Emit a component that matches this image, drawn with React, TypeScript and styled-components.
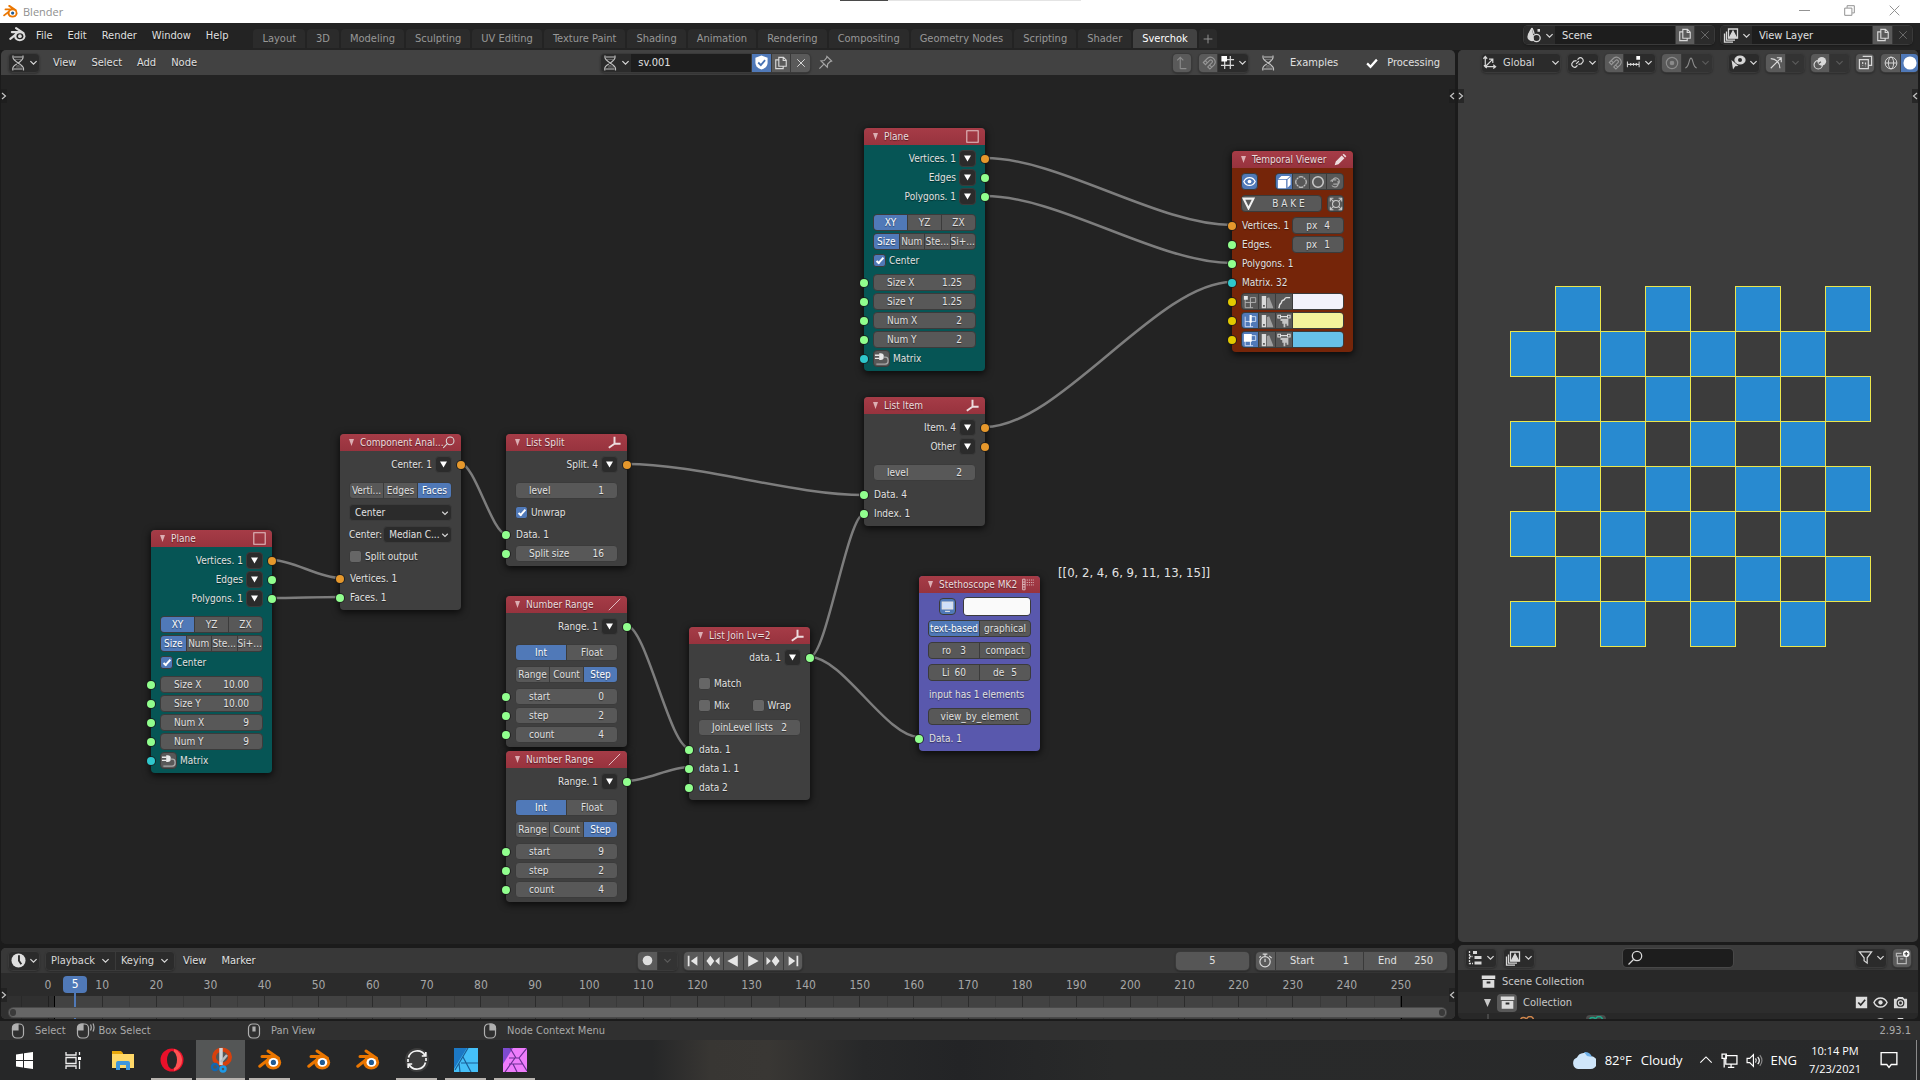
import React from 'react';
import styled, { createGlobalStyle, css } from 'styled-components';

const UI_FONT = '"DejaVu Sans Condensed", "DejaVu Sans", sans-serif';
const SYS_FONT = '"Open Sans", "Noto Sans", sans-serif';

const c = {
  bg: '#1b1b1b',
  top: '#232323',
  canvas: '#232323',
  header: '#424242',
  panel: '#3c3c3c',
  dark: '#2b2b2b',
  field: '#585858',
  blue: '#5079b8',
  edge: '#3b3b3b',
  text: '#e0e0e0',
  orange: '#e6982c',
  green: '#91ff8e',
  cyan: '#2fc7cc',
  yellow: '#e3c900',
};

const GlobalStyle = createGlobalStyle`
  *, *::before, *::after { box-sizing: border-box; }
  html, body { margin: 0; background: ${c.bg}; }
  body { font-family: ${UI_FONT}; font-size: 11px; line-height: 16px; color: ${c.text}; }
  button, input, select { font: inherit; color: inherit; margin: 0; }
  button { border: 0; padding: 0; background: none; cursor: default; }
  svg { display: block; flex: none; }
`;

/* ---------- icons ---------- */

const S = ({ size = 14, children, sw = 1.3, color = 'currentColor' }: any) => (
  <svg width={size} height={size} viewBox="0 0 16 16" fill="none" stroke={color} strokeWidth={sw} aria-hidden="true">
    {children}
  </svg>
);

const BlenderLogo = ({ size, mono }: { size: number; mono?: boolean }) => {
  const body = mono ? '#dcdcdc' : '#ea7600';
  return (
    <svg width={size} height={size} viewBox="0 0 24 24" aria-hidden="true">
      <path d="M10 3 L20.5 10.2 M4 8.6 H17 M1.8 18.2 L13 9.4" stroke={body} strokeWidth="3" strokeLinecap="round" fill="none" />
      <ellipse cx="15.2" cy="14.6" rx="8" ry="7" fill={body} />
      <ellipse cx="15.4" cy="14.4" rx="4.9" ry="4.3" fill={mono ? '#232323' : '#fff'} />
      <circle cx="15.4" cy="14.4" r="2.6" fill={mono ? '#dcdcdc' : '#1f5b94'} />
    </svg>
  );
};
const Chevron = ({ size = 9, dim }: { size?: number; dim?: boolean }) => (
  <S size={size} sw={2.2} color={dim ? '#5a5a5a' : '#d8d8d8'}><path d="M2.5 5.5 8 11l5.500-5.500" /></S>
);
const Dna = ({ size = 16 }) => (
  <S size={size} color="#c0c0c0" sw={1.2}>
    <path d="M3 .5v2C3 6.500 13.500 9.500 13.500 13.500v2M13 .5v2C13 5 9.500 7 7.500 8.600M6.800 9.100C4.500 10.500 2.800 11.800 2.800 13.500v2" />
    <path d="M4 2h8.500M3.500 14h9" strokeWidth="1" />
    <path d="M5 4.400h6M6 12h6M6.500 10.700h3" strokeWidth="0.600" opacity="0.700" />
  </S>
);
const Copy = ({ size = 14 }) => (
  <S size={size}><path d="M5.500 1.500h5.300l3.200 3.200v7H5.500zM10.500 1.500v3.600H14M5.200 4.500H2v10h8.500v-2.600" /></S>
);
const Cross = ({ size = 12, dim }: any) => <S size={size} color={dim ? '#6a6a6a' : '#d8d8d8'}><path d="M3 3l10 10M13 3 3 13" /></S>;
const Shield = () => (
  <S size={15} sw={0}><path d="M8 .5 14.500 3v5c0 4-3 6.500-6.500 7.500C4.500 14.500 1.500 12 1.500 8V3z" fill="#fff" /><path d="M4.500 8 7.300 10.800 11.800 5.500" stroke="#4772b3" strokeWidth="1.900" /></S>
);
const Pin = () => <S size={15} color="#a4a4a4"><path d="M9.500 1.500l5 5-1.500.5-2.700 2.700-.4 3.300L3.200 6.300l3.500-.4L9.200 3zM6.300 9.700 1.500 14.500" /></S>;
const Magnet = () => <S size={15} color="#979797" sw={1.200}><path d="M2.500 8 7 3.500a5 5 0 0 1 7 7L9.500 15l-2.300-2.300 4.500-4.500a1.700 1.700 0 0 0-2.400-2.400L4.800 10.300zM4.500 6l2.300 2.300M11.500 13 9.200 10.700" /></S>;
const Check = () => <S size={12} sw={3} color="#fff"><path d="M1.500 8.500 6 13 14.500 3.500" /></S>;
const Scene = () => <S size={16}><path d="M6 1C4.500 4 2 6.500 2 10a4 3.500 0 0 0 6 3" fill="#d8d8d8" /><path d="M6 1c1 2.500 2 4 2 6" /><circle cx="10.500" cy="11" r="3.700" /><path d="M11.500 3.300h2.500" strokeWidth="2.800" /></S>;
const Layers = () => <S size={16}><path d="M5.500 2h9v9h-9z" /><path d="M6.500 10.500 10 4l3.500 6.500z" fill="#d8d8d8" /><path d="M3.500 4.500v8.700H12M1.500 6.500v8.700H10" /></S>;
const Axes = () => <S size={15}><path d="M3.500 1.500v11h11M1.500 4l2-2.500L5.500 4M12 10.500l2.500 2-2.500 2M4 12 11 5M7.500 4.500h4V8.500M2 11l3 3" /></S>;
const Pivot = () => <S size={15}><path d="M6.500 9.500 9.500 6.500M8 5l2-2a3.200 3.200 0 0 1 4 4l-2 2.500-3 .5M8 11l-2 2a3.200 3.200 0 0 1-4-4l2-2.500L7 6" /></S>;
const SnapGrid = () => <S size={15}><path d="M5 6v9M11 1v14M1 11h14M6 5h9" /><path d="M1.500 1h6v6h-6z" fill="#fff" stroke="none" /></S>;
const SnapInc = () => <S size={15} sw={1.100}><path d="M1.500 7v6M5 8.500v3M8 8.500v3M11 8.500v3M14 7v6M1.500 10H14" /><path d="M11 1h4v4h-4z" fill="#fff" stroke="none" /></S>;
const Radio = () => <S size={14} color="#8b8b8b"><circle cx="8" cy="8" r="6.500" /><circle cx="8" cy="8" r="2" fill="#8b8b8b" /></S>;
const Falloff = () => <S size={14} color="#8b8b8b"><path d="M1.500 13.500C6 13.500 5.500 2.500 8 2.500s2 11 6.500 11" /></S>;
const EyeCursor = () => <S size={16}><ellipse cx="10" cy="5" rx="5" ry="3.800" fill="#d8d8d8" /><circle cx="10" cy="5" r="2" fill="#2b2b2b" stroke="none" /><path d="M1.500 5l7 6-3.300.3L3 14.500z" fill="#d8d8d8" stroke="none" /></S>;
const Gizmo = () => <S size={14}><path d="M2 14 13.500 2.500M9 2h5v5M2 3c6 0 10.500 4.500 10.500 11" /></S>;
const Overlay = () => <S size={14}><circle cx="6" cy="10" r="4.800" /><circle cx="10" cy="6" r="5" fill="#d8d8d8" stroke="none" /><path d="M6.500 8.500 9 6.500" stroke="#555" /></S>;
const Xray = () => <S size={15}><path d="M5 1.500h9.500V11H11M1.500 5H11v9.500H1.500z" /><path d="M5 7.500v4M8 8v4" strokeDasharray="2 1.500" /></S>;
const Globe = () => <S size={14} sw={1.100}><circle cx="8" cy="8" r="6.700" /><ellipse cx="8" cy="8" rx="3" ry="6.700" /><path d="M1.300 8h13.400" /></S>;
const Solid = () => <S size={14} sw={0}><circle cx="8" cy="8" r="7.500" fill="#fff" /></S>;
const UpArrow = () => <S size={14} color="#8c8c8c"><path d="M6 14.500V1.500M2.500 5 6 1.500 9.500 5M6 14.500h7" /></S>;
const Clock = () => <S size={15} sw={0}><circle cx="8" cy="8" r="7.500" fill="#dedede" /><path d="M8.500 2.500V8.300L11 12" stroke="#2b2b2b" strokeWidth="2" /></S>;
const Stopwatch = () => <S size={15}><circle cx="7.500" cy="9.300" r="5.500" /><path d="M7.500 9.500V6M5 1.200h5M7.500 1.200v2.500M12 3l2.500 2.500M3 3.500 1.500 5" /></S>;
const Tree = () => <S size={16}><path d="M2.500 1v12.500H6M2.500 6.500H6" strokeDasharray="2 1" /><path d="M6 2.500h4M7.500 7.500h7M7.500 13h7" strokeWidth="3" /></S>;
const Search = ({ size = 15 }) => <S size={size} color="#d8d8d8"><circle cx="10" cy="6" r="4.700" /><path d="M6.500 9.500 1.500 14.500" /></S>;
const Funnel = () => <S size={15}><path d="M1.500 2h13L9.800 8.300V14L6.500 11.500V8.300z" /></S>;
const NewCollection = () => <S size={15} color="#b5b5b5"><path d="M7 3.500H1.500v3H14M2.500 6.500v8h9.500v-8M5.500 9.500h3.500" /><circle cx="12" cy="4" r="3.500" fill="#fff" stroke="none" /><path d="M12 2v4M10 4h4" stroke="#444" /></S>;
const Box = () => <S size={15} sw={0}><path d="M.8 1.500h14.400v3.800H.8zM1.800 6.300h12.400v8.400H1.800z" fill="#dcdcdc" /><path d="M6 8h4v2H6z" fill="#2b2b2b" /></S>;
const Camera = () => <S size={15}><path d="M1 4h3l1.500-2h5L12 4h3v10H1z" fill="#d8d8d8" stroke="none" /><circle cx="8" cy="8.500" r="3.500" stroke="#2b2b2b" /><circle cx="8" cy="8.500" r="1.500" fill="#2b2b2b" stroke="none" /></S>;
const Eye = ({ size = 14, color = '#e0e0e0' }) => <S size={size} color={color}><path d="M1 8c3-6.500 11-6.500 14 0-3 6.500-11 6.500-14 0z" strokeWidth="1.500" /><circle cx="8" cy="8" r="2.300" fill={color} stroke="none" /></S>;
const TickMark = () => <S size={13} sw={0}><path d="M1 1h14v14H1z" fill="#dcdcdc" /><path d="M4 8l3 3 5.500-6.500" stroke="#2b2b2b" strokeWidth="2" /></S>;
const MovieCam = ({ color }: { color: string }) => <S size={16} color={color} sw={1.500}><circle cx="4.500" cy="4.500" r="3" /><circle cx="11" cy="4" r="3.500" /><path d="M2 9h10v6H2zM12 11l3-2v5z" fill={color} /></S>;
const Mouse = ({ part, drag }: { part: 'l' | 'm' | 'r'; drag?: boolean }) => (
  <svg width={drag ? 20 : 16} height="16" viewBox={drag ? '0 0 20 16' : '0 0 16 16'} fill="none" stroke="#b0b0b0" strokeWidth="1.200" aria-hidden="true">
    <path d="M2.500 5a4 4 0 0 1 4-4h3a4 4 0 0 1 4 4v6a4 4 0 0 1-4 4h-3a4 4 0 0 1-4-4z" />
    {part === 'l' && <path d="M2.500 7V4.500Q3 1 8 1v6z" fill="#b0b0b0" />}
    {part === 'r' && <path d="M13.500 7V4.500Q13 1 8 1v6z" fill="#b0b0b0" />}
    {part === 'm' && <path d="M7 4h2v4H7z" fill="#b0b0b0" />}
    {drag && <path d="M15.500 1.500q1.500 3 0 6M18 .5q2 4 0 8" />}
  </svg>
);

const SquareIcon = () => <S size={13} sw={1.300} color="#e3c3c6"><path d="M1 1h14v14H1z" /></S>;
const AxisIcon = () => <S size={13} sw={2.400} color="#ecdcde"><path d="M8 1v8.500h7.500M8 9.500 1 14.500" /></S>;
const LineIcon = () => <S size={13} sw={1.200} color="#e3c3c6"><path d="M1 15 15 1" /></S>;
const PencilIcon = () => <S size={13} sw={0}><path d="M.8 15.200 2.200 10.500 9.500 3.200l3.300 3.300-7.300 7.300zM10.500 2.200 12 .8l3.200 3.200-1.400 1.500z" fill="#ecdcde" /></S>;
const SheetIcon = () => <S size={13} sw={1.200} color="#dcb9bc"><path d="M2 1.500h3v13H2zM2 5h3M2 8h3M2 11h3" /><path d="M7 2.500h9M7 5.500h9M7 8.500h9" strokeDasharray="1.500 1.200" /></S>;

const Transport = ({ kind }: { kind: string }) => {
  const d: Record<string, string> = {
    first: 'M2 2h2v12H2zM13 2.500v11L5.500 8z',
    prevKey: 'M5 2l4.500 6L5 14 .5 8zM15.500 3.500v9L10.500 8z',
    back: 'M13.500 1.500v13L1.500 8z',
    play: 'M2.500 1.500v13L14.500 8z',
    nextKey: 'M11 2l4.500 6L11 14 6.500 8zM.5 3.500v9L5.500 8z',
    last: 'M12 2h2v12h-2zM3 2.500v11L10.500 8z',
  };
  return <S size={14} sw={0}><path d={d[kind]} fill="#e6e6e6" /></S>;
};

/* ---------- shared chrome ---------- */

const Page = styled.div`
  min-height: 100vh;
  display: flex;
  flex-direction: column;
  background: ${c.bg};
`;

const TitleBar = styled.header`
  position: relative;
  height: 23px;
  background: #fff;
  color: #8f8f8f;
  font-family: ${SYS_FONT};
  display: flex;
  align-items: center;
  gap: 5px;
  padding-left: 3px;
`;
const TitleProgress = styled.div`
  position: absolute;
  top: 0;
  left: 840px;
  width: 241px;
  height: 1px;
  background: linear-gradient(90deg, #4a4a4a 48px, #e4e4e4 48px);
`;
const WindowButtons = styled.div`
  margin: 0 3px 2px auto;
  display: flex;
  button { width: 45px; height: 20px; display: flex; align-items: center; justify-content: center; }
`;

const TopBar = styled.nav`
  height: 27px;
  background: ${c.top};
  display: flex;
  align-items: flex-start;
  padding: 3px 8px 0 9px;
`;
const Spacer = styled.div<{ $grow?: number }>`
  flex: ${(p) => p.$grow ?? 1};
`;
const Menus = styled.div`
  display: flex;
  align-items: center;
  height: 19px;
  padding-left: 3px;
`;
const MenuButton = styled.button`
  height: 19px;
  padding: 0 8px 0 7px;
  text-shadow: 0 1px 1px #0008;
`;
const Tabs = styled.div`
  display: flex;
  gap: 2px;
  align-self: flex-end;
  margin: 0 0 2px 17px;
`;
const Tab = styled.button<{ $active?: boolean }>`
  height: 19px;
  padding: 0 9px;
  border-radius: 4px 4px 0 0;
  background: ${(p) => (p.$active ? '#424242' : '#2b2b2b')};
  color: ${(p) => (p.$active ? '#fff' : '#989898')};
`;
const AddTab = styled(Tab)`
  padding: 0 4px;
`;

const Group = styled.div<{ $gap?: number }>`
  display: flex;
  margin-right: ${(p) => p.$gap ?? 0}px;
  border-radius: 4px;
  box-shadow: 0 0 0 1px #3a3a3a, 0 1px 2px 1px #0004;
  overflow: hidden;
  height: 18px;
  > * + * { border-left: 1px solid #3a3a3a; }
`;
const Cell = styled.button<{ $w: number; $gap?: number; $tone?: 'dark' | 'light' | 'blue' | 'faint' }>`
  width: ${(p) => p.$w}px;
  height: 18px;
  display: flex;
  align-items: center;
  justify-content: center;
  gap: ${(p) => p.$gap ?? 3}px;
  color: #d8d8d8;
  background: ${(p) => ({ dark: c.dark, light: '#5a5a5a', blue: c.blue, faint: '#333' }[p.$tone ?? 'dark'])};
`;
const TextCell = styled.input<{ $w: number }>`
  width: ${(p) => p.$w}px;
  height: 18px;
  border: 0;
  padding: 0 7px;
  background: #1d1d1d;
`;

const Workspace = styled.main`
  flex: 1;
  display: grid;
  grid-template-columns: minmax(0, 1fr) 460px;
  gap: 3px;
  padding: 0 2px 0 1px;
`;
const Column = styled.div<{ $gap: number }>`
  display: flex;
  flex-direction: column;
  gap: ${(p) => p.$gap}px;
  min-width: 0;
`;
const Area = styled.section<{ $grow?: boolean; $bg: string }>`
  position: relative;
  display: flex;
  flex-direction: column;
  flex: ${(p) => (p.$grow ? '1' : 'none')};
  background: ${(p) => p.$bg};
  border-radius: 5px;
  overflow: hidden;
`;
const AreaHeader = styled.div<{ $bg?: string; $pad?: string }>`
  display: flex;
  align-items: center;
  height: 25px;
  padding: ${(p) => p.$pad ?? '0 8px'};
  background: ${(p) => p.$bg ?? c.header};
`;
const HeaderLabel = styled.button`
  display: flex;
  align-items: center;
  gap: 9px;
  height: 18px;
  padding: 0 14px;
`;
const SideTab = styled.button<{ $side: 'left' | 'right'; $top: number }>`
  position: absolute;
  ${(p) => p.$side}: 0;
  top: ${(p) => p.$top}px;
  width: 6px;
  height: 14px;
  display: flex;
  justify-content: center;
  align-items: center;
  background: #1d1d1daa;
  z-index: 3;
`;
const Arrow = ({ side, top }: { side: 'left' | 'right'; top: number }) => (
  <SideTab $side={side} $top={top} aria-label="Toggle side panel">
    <S size={8} sw={2.400} color="#c4c4c4"><path d={side === 'left' ? 'M4 2l7 6-7 6' : 'M12 2 5 8l7 6'} /></S>
  </SideTab>
);

/* ---------- nodes ---------- */

const Canvas = styled.div`
  position: relative;
  flex: 1;
  background: ${c.canvas};
  overflow: hidden;
`;
const Links = styled.svg`
  position: absolute;
  inset: 0;
  width: 100%;
  height: 100%;
`;
const NodeBox = styled.article<{ $x: number; $y: number; $bg: string }>`
  position: absolute;
  left: ${(p) => p.$x}px;
  top: ${(p) => p.$y}px;
  width: 121px;
  border-radius: 4px;
  background: ${(p) => p.$bg};
  box-shadow: 0 2px 7px 1px #000a;
  font-size: 10px;
  line-height: 17px;
  color: #e2e2e2;
  text-shadow: 0 1px 1px #0007;
`;
const NodeHead = styled.header`
  height: 17px;
  padding: 0 6px 0 8px;
  display: flex;
  align-items: center;
  gap: 5px;
  border-radius: 4px 4px 0 0;
  background: linear-gradient(#a63c47, #97333e);
  color: #ecdcde;
  white-space: nowrap;
`;
const NodeTitle = styled.h2`
  flex: 1;
  min-width: 0;
  margin: 0;
  font: inherit;
`;
const NodeBody = styled.div`
  display: flex;
  flex-direction: column;
  gap: 5px;
  padding: 5px 9px 4px;
`;
const Stack = styled.div<{ $after?: number }>`
  display: flex;
  flex-direction: column;
  gap: 2px;
  margin-bottom: ${(p) => p.$after ?? 0}px;
`;
const Row = styled.div<{ $justify?: string; $gap?: number }>`
  position: relative;
  display: flex;
  align-items: center;
  justify-content: ${(p) => p.$justify ?? 'flex-start'};
  gap: ${(p) => p.$gap ?? 3}px;
  height: 17px;
  white-space: nowrap;
`;
const Halves = styled.div`
  display: grid;
  grid-template-columns: 1fr 1fr;
  gap: 4px;
`;
const Socket = styled.i<{ $side: 'left' | 'right'; $c: string }>`
  position: absolute;
  ${(p) => p.$side}: -13px;
  top: 5px;
  width: 8px;
  height: 8px;
  border-radius: 50%;
  background: ${(p) => p.$c};
  box-shadow: 0 0 0 1px #1a1a1acc;
`;
const control = css`
  height: 17px;
  border: 1px solid ${c.edge};
  border-radius: 4px;
  background: ${c.field};
  text-shadow: inherit;
`;
const Drop = styled.button`
  ${control};
  width: 17px;
  background: ${c.dark};
  display: flex;
  align-items: center;
  justify-content: center;
`;
const Push = styled.button<{ $w?: number; $on?: boolean }>`
  ${control};
  ${(p) => (p.$w ? `width: ${p.$w}px;` : 'flex: 1;')}
  display: flex;
  align-items: center;
  justify-content: center;
  line-height: 15px;
  background: ${(p) => (p.$on ? c.blue : c.field)};
`;
const Seg = styled.div<{ $fit?: boolean }>`
  ${control};
  width: ${(p) => (p.$fit ? 'auto' : '100%')};
  display: grid;
  grid-auto-flow: column;
  grid-auto-columns: ${(p) => (p.$fit ? '16px' : 'minmax(0, 1fr)')};
  gap: 1px;
  overflow: hidden;
  background: ${c.edge};
`;
const SegButton = styled.button<{ $on?: boolean }>`
  height: 15px;
  line-height: 15px;
  display: flex;
  align-items: center;
  justify-content: center;
  background: ${(p) => (p.$on ? c.blue : c.field)};
  color: ${(p) => (p.$on ? '#fff' : '#e0e0e0')};
  text-shadow: inherit;
`;
const NumLabel = styled.label<{ $w?: number; $bare?: boolean }>`
  ${control};
  ${(p) => (p.$w ? `width: ${p.$w}px;` : 'flex: 1;')}
  ${(p) => p.$bare && 'border: 0; border-radius: 0; height: 15px; width: auto;'}
  min-width: 0;
  display: flex;
  align-items: center;
  padding: 0 13px;
  line-height: 15px;
  input { flex: 1; width: 100%; min-width: 0; border: 0; padding: 0; background: none; text-align: right; text-shadow: inherit; outline: 0; height: 15px; }
`;
const Num = ({ label, value, w, bare }: { label: string; value: string; w?: number; bare?: boolean }) => (
  <NumLabel $w={w} $bare={bare}>{label}<input defaultValue={value} /></NumLabel>
);
const Tick = styled.label`
  display: flex;
  align-items: center;
  gap: 3px;
  input {
    appearance: none;
    position: relative;
    flex: none;
    width: 13px;
    height: 13px;
    border: 1px solid ${c.edge};
    border-radius: 3px;
    background: #666;
  }
  input:checked { background: ${c.blue}; }
  input:checked::after {
    content: '';
    position: absolute;
    left: 4px;
    top: 1px;
    width: 4px;
    height: 8px;
    border: solid #fff;
    border-width: 0 2px 2px 0;
    rotate: 42deg;
  }
`;
const TickField = ({ label, on }: { label: string; on?: boolean }) => (
  <Tick><input type="checkbox" defaultChecked={on} />{label}</Tick>
);
const SelectWrap = styled.span`
  ${control};
  flex: 1;
  min-width: 0;
  position: relative;
  background: ${c.dark};
  select { appearance: none; width: 100%; height: 15px; border: 0; padding: 0 5px; background: none; line-height: 15px; outline: 0; display: block; }
  svg { position: absolute; right: 2px; top: 4px; pointer-events: none; }
`;
const Swatch = styled.input`
  ${control};
  appearance: none;
  width: 51px;
  padding: 0;
  overflow: hidden;
  &::-webkit-color-swatch-wrapper { padding: 0; }
  &::-webkit-color-swatch { border: 0; border-radius: 0; }
`;
const WideSwatch = styled(Swatch)`
  width: 68px;
  height: 19px;
`;
const ColorRow = styled.div`
  flex: 1;
  display: flex;
  ${Seg} { border-radius: 4px 0 0 4px; border-right: 0; }
  ${Swatch} { flex: 1; border-radius: 0 4px 4px 0; }
`;
const InLabel = styled.span`
  flex: 1;
  padding-left: 1px;
`;

type NodeProps = { x: number; y: number; title: string; icon: React.ReactNode; bg?: string; children: React.ReactNode };
const Node = ({ x, y, title, icon, bg = '#3f3f3f', children }: NodeProps) => (
  <NodeBox $x={x} $y={y} $bg={bg}>
    <NodeHead>
      <svg width="7" height="7" viewBox="0 0 7 7"><path d="M1 0h5L3.500 7z" fill="#dcaeb3" /></svg>
      <NodeTitle>{title}</NodeTitle>
      {icon}
    </NodeHead>
    <NodeBody>{children}</NodeBody>
  </NodeBox>
);
const Out = ({ label, color = c.green }: { label: string; color?: string }) => (
  <Row $justify="flex-end">
    {label}
    <Drop aria-label={label}><svg width="7" height="7" viewBox="0 0 8 8"><path d="M0 .5h8L4 7.500z" fill="#fff" /></svg></Drop>
    <Socket $side="right" $c={color} />
  </Row>
);
const In = ({ color = c.green, label, children }: { color?: string; label?: string; children?: React.ReactNode }) => (
  <Row>
    <Socket $side="left" $c={color} />
    {label && <InLabel>{label}</InLabel>}
    {children}
  </Row>
);
const Segments = ({ items, on }: { items: string[]; on?: number }) => (
  <Seg>{items.map((t, i) => <SegButton key={t} $on={i === on} aria-pressed={i === on}>{t}</SegButton>)}</Seg>
);

const PlaneNode = ({ x, y, size, num }: { x: number; y: number; size: string; num: string }) => (
  <Node x={x} y={y} title="Plane" bg="#065555" icon={<SquareIcon />}>
    <Stack $after={4}>
      <Out label="Vertices. 1" color={c.orange} />
      <Out label="Edges" />
      <Out label="Polygons. 1" />
    </Stack>
    <Stack>
      <Segments items={['XY', 'YZ', 'ZX']} on={0} />
      <Segments items={['Size', 'Num', 'Ste...', 'Si+...']} on={0} />
      <Row><TickField label="Center" on /></Row>
    </Stack>
    <Stack>
      <In><Num label="Size X" value={size} /></In>
      <In><Num label="Size Y" value={size} /></In>
      <In><Num label="Num X" value={num} /></In>
      <In><Num label="Num Y" value={num} /></In>
      <In color={c.cyan}>
        <Push $w={17} aria-label="Link matrix">
          <S size={15} sw={1.400}><path d="M5.500 2.500v7h1.500a3.500 3.500 0 0 0 0-7z" fill="#e8e8e8" stroke="none" /><path d="M1 4.500h5M1 7.800h5" stroke="#e8e8e8" /><path d="M10 6.500H12a3 3 0 0 1 3 3v1.500a3 3 0 0 1-3 3H2.500" stroke="#a8a8a8" /></S>
        </Push>
        Matrix
      </In>
    </Stack>
  </Node>
);

const RangeNode = ({ x, y, start }: { x: number; y: number; start: string }) => (
  <Node x={x} y={y} title="Number Range" icon={<LineIcon />}>
    <Stack $after={4}><Out label="Range. 1" /></Stack>
    <Segments items={['Int', 'Float']} on={0} />
    <Segments items={['Range', 'Count', 'Step']} on={2} />
    <Stack>
      <In><Num label="start" value={start} /></In>
      <In><Num label="step" value="2" /></In>
      <In><Num label="count" value="4" /></In>
    </Stack>
  </Node>
);

const ViewerColor = ({ color, on, mode }: { color: string; on: boolean; mode: number }) => (
  <Row>
    <Socket $side="left" $c={c.yellow} />
    <ColorRow>
      <Seg $fit>
        <SegButton $on={on} aria-label="Show">
          <S size={14} sw={1} color={on ? '#d8e4f8' : '#b8b8b8'}>
            <path d="M2.500 3v11.500h6V8.500h-6M8.500 8.500h6V3h-6v11.500h3" />
            {mode === 0 && <path d="M1 1h4.500v4.500H1z" fill="#e8e8e8" stroke="none" />}
            {mode === 1 && <path d="M7.500 1H10v9H7.500z" fill="#fff" stroke="none" />}
            {mode === 2 && <path d="M1 1h9v9H1z" fill="#fff" stroke="none" />}
          </S>
        </SegButton>
        <SegButton aria-label="Random color">
          <S size={14} sw={0}><path d="M2 1h5v14H2z" fill="#dadada" /><path d="M8 3.500l2.500-1L15 14v1H8z" fill="#a0a0a0" /><path d="M3.500 11.500h2v2h-2z" fill="#555" /></S>
        </SegButton>
        <SegButton aria-label="Attribute color">
          {mode === 0
            ? <S size={14} sw={1.600}><path d="M2 15c1.500-3 0-4 2-5s.5-4 3-4 1-3 4-3h4" /></S>
            : <S size={14} sw={1.200}><path d="M1 1.500h3v3H1zM12 1.500h3v3h-3zM4 3h8" /><path d="M4 5.500h9v8h-2v-2.500H9.500V15H7.500v-4H6V8H4z" fill="#c4c4c4" stroke="none" /></S>}
        </SegButton>
      </Seg>
      <Swatch type="color" defaultValue={color} aria-label="Color" />
    </ColorRow>
  </Row>
);

const TemporalViewer = () => (
  <Node x={1231} y={76} title="Temporal Viewer" bg="#752509" icon={<PencilIcon />}>
    <Row $justify="space-between">
      <Push $w={17} $on aria-label="Visible"><Eye size={13} color="#fff" /></Push>
      <Seg $fit>
        <SegButton $on aria-label="Solid"><S size={14} sw={1.200}><path d="M1 5.500h9.500V15H1zM1.500 4.500 5 1h10l-3.500 3.500zM12 5.500 15.500 2v9L12 14.500z" fill="#fff" stroke="none" /></S></SegButton>
        <SegButton aria-label="Wire"><S size={14} color="#bcbcbc"><path d="M5.500 2.500a6 6 0 0 1 5 0M13.500 5.500a6 6 0 0 1 0 5M10.500 13.500a6 6 0 0 1-5 0M2.500 10.500a6 6 0 0 1 0-5M3 5l2-2M11 3l2 2M13 11l-2 2M5 13l-2-2" strokeWidth="1.500" /></S></SegButton>
        <SegButton aria-label="Outline"><S size={14} color="#c8c8c8"><circle cx="8" cy="8" r="6" strokeWidth="1.800" /></S></SegButton>
        <SegButton aria-label="Matrix"><S size={14} color="#a8a8a8"><path d="M5 8a4 4 0 1 1 6.500 2.500H6M11 7a4 4 0 1 1-6.500 5M3 7.500A4 4 0 0 1 5 5.500h4.500" strokeWidth="1.400" /></S></SegButton>
      </Seg>
    </Row>
    <Row $justify="space-between">
      <Push $w={81}>
        <S size={13} sw={2.600} color="#f0f0f0"><path d="M2 2h12L8 14z" /></S>
        <InLabel>B A K E</InLabel>
      </Push>
      <Push $w={17} aria-label="Bake options"><S size={14} color="#c8c8c8" sw={1.200}><circle cx="8" cy="8" r="4" /><path d="M2 2l3 3M14 2l-3 3M2 14l3-3M14 14l-3-3M1.500 5V1.500H5M11 1.500h3.500V5M1.500 11v3.500H5M11 14.500h3.500V11" /></S></Push>
    </Row>
    <Stack>
      <In color={c.orange} label="Vertices. 1"><Num label="px" value="4" w={52} /></In>
      <In label="Edges."><Num label="px" value="1" w={52} /></In>
      <In label="Polygons. 1" />
      <In color={c.cyan} label="Matrix. 32" />
      <ViewerColor color="#f2f2fb" on={false} mode={0} />
      <ViewerColor color="#f3f29c" on mode={1} />
      <ViewerColor color="#67c0e8" on mode={2} />
    </Stack>
  </Node>
);

type P = [number, number];
const LINKS: [P, P][] = [
  [[271, 485], [339, 503]],
  [[271, 523], [339, 522]],
  [[460, 389], [505, 459]],
  [[626, 389], [863, 420]],
  [[626, 551], [688, 673]],
  [[626, 706], [688, 692]],
  [[809, 582], [863, 439]],
  [[809, 582], [918, 662]],
  [[984, 83], [1231, 150]],
  [[984, 121], [1231, 188]],
  [[984, 352], [1231, 207]],
];

const Readout = styled.output<{ $x: number; $y: number }>`
  position: absolute;
  left: ${(p) => p.$x}px;
  top: ${(p) => p.$y}px;
  font-size: 13px;
  color: #e2e2e2;
`;

const NodeCanvas = () => (
  <Canvas>
    <Links>
      {LINKS.map(([a, b], i) => {
        const h = (b[0] - a[0]) * 0.3;
        const d = `M${a[0]} ${a[1]}C${a[0] + h} ${a[1]} ${b[0] - h} ${b[1]} ${b[0]} ${b[1]}`;
        return <path key={i} d={d} fill="none" stroke="#7d7d7d" strokeWidth="2.500" />;
      })}
    </Links>
    <Arrow side="left" top={14} />
    <Arrow side="right" top={14} />

    <PlaneNode x={150} y={455} size="10.00" num="9" />
    <PlaneNode x={863} y={53} size="1.25" num="2" />

    <Node x={339} y={359} title="Component Anal..." icon={<Search size={13} />}>
      <Stack $after={4}><Out label="Center. 1" color={c.orange} /></Stack>
      <Segments items={['Verti...', 'Edges', 'Faces']} on={2} />
      <Row>
        <SelectWrap><select aria-label="Mode"><option>Center</option></select><Chevron size={8} /></SelectWrap>
      </Row>
      <Row $gap={1}>
        <label htmlFor="center-kind">Center:</label>
        <SelectWrap><select id="center-kind"><option>Median C...</option></select><Chevron size={8} /></SelectWrap>
      </Row>
      <Row><TickField label="Split output" /></Row>
      <Stack>
        <In color={c.orange} label="Vertices. 1" />
        <In label="Faces. 1" />
      </Stack>
    </Node>

    <Node x={505} y={359} title="List Split" icon={<AxisIcon />}>
      <Stack $after={4}><Out label="Split. 4" color={c.orange} /></Stack>
      <Row><Num label="level" value="1" /></Row>
      <Row><TickField label="Unwrap" on /></Row>
      <Stack>
        <In label="Data. 1" />
        <In><Num label="Split size" value="16" /></In>
      </Stack>
    </Node>

    <RangeNode x={505} y={521} start="0" />
    <RangeNode x={505} y={676} start="9" />

    <Node x={688} y={552} title="List Join Lv=2" icon={<AxisIcon />}>
      <Stack $after={4}><Out label="data. 1" /></Stack>
      <Row><TickField label="Match" /></Row>
      <Halves>
        <Row><TickField label="Mix" /></Row>
        <Row><TickField label="Wrap" /></Row>
      </Halves>
      <Row><Num label="JoinLevel lists" value="2" /></Row>
      <Stack>
        <In label="data. 1" />
        <In label="data 1. 1" />
        <In label="data 2" />
      </Stack>
    </Node>

    <Node x={863} y={322} title="List Item" icon={<AxisIcon />}>
      <Stack $after={4}>
        <Out label="Item. 4" color={c.orange} />
        <Out label="Other" color={c.orange} />
      </Stack>
      <Row><Num label="level" value="2" /></Row>
      <Stack>
        <In label="Data. 4" />
        <In label="Index. 1" />
      </Stack>
    </Node>

    <Node x={918} y={501} title="Stethoscope MK2" bg="#5958ad" icon={<SheetIcon />}>
      <Row $justify="flex-end" $gap={7}>
        <Push $w={17} $on aria-label="Show in view"><S size={13} sw={1.400}><path d="M1.500 2.500h13v8.500h-13z" fill="#cfe0fb" /><path d="M5 14h6" /></S></Push>
        <WideSwatch type="color" defaultValue="#fafafa" aria-label="Text color" />
      </Row>
      <Segments items={['text-based', 'graphical']} on={0} />
      <Seg><Num bare label="ro" value="3" /><SegButton>compact</SegButton></Seg>
      <Seg><Num bare label="Li" value="60" /><Num bare label="de" value="5" /></Seg>
      <Row><InLabel>input has 1 elements</InLabel></Row>
      <Row><Push>view_by_element</Push></Row>
      <In label="Data. 1" />
    </Node>

    <TemporalViewer />
    <Readout $x={1057} $y={490}>[[0, 2, 4, 6, 9, 11, 13, 15]]</Readout>
  </Canvas>
);

/* ---------- timeline ---------- */

const Lane = styled.div`
  position: relative;
  padding: 0 27px 0 20px;
  background: #424242;
`;
const Frames = styled.div`
  position: relative;
  display: grid;
  grid-template-columns: repeat(26, minmax(0, 1fr));
`;
const FrameLabel = styled.span`
  height: 23px;
  line-height: 24px;
  font-size: 12px;
  text-align: center;
  color: #a6a6a6;
`;
const FrameTrack = styled.span`
  height: 23px;
  background:
    linear-gradient(#2c2c2c, #2c2c2c) 50% 0 / 1px 100% no-repeat,
    linear-gradient(#393939, #393939) 0 0 / 1px 100% no-repeat;
`;
const Ruler = styled(Lane)`
  background: #2b2b2b;
`;
const OutOfRange = styled.div<{ $from?: string; $to?: string }>`
  position: absolute;
  top: 0;
  bottom: 0;
  background: #0004;
  ${(p) => p.$from && `left: ${p.$from}; right: 0; border-left: 1px solid #000;`}
  ${(p) => p.$to && `left: 0; width: ${p.$to}; border-right: 1px solid #000;`}
`;
const Playhead = styled.div`
  position: absolute;
  left: 3.846%;
  top: 3px;
  z-index: 2;
  width: 24px;
  height: 17px;
  margin-left: -12px;
  border-radius: 4px;
  background: ${c.blue};
  color: #fff;
  font-size: 12px;
  line-height: 17px;
  text-align: center;
  &::after { content: ''; position: absolute; left: 11px; top: 17px; width: 2px; height: 26px; background: ${c.blue}; }
`;
const ScrollBar = styled.div`
  position: absolute;
  z-index: 2;
  left: 8px;
  right: 9px;
  bottom: 2px;
  height: 9px;
  border-radius: 5px;
  background: #666;
  display: flex;
  justify-content: space-between;
  align-items: center;
  padding: 0 1px;
  box-shadow: 0 0 0 1px #4a4a4a;
  i { width: 6px; height: 7px; border-radius: 4px; background: #3a3a3a; }
`;
const TimelineNum = styled.label<{ $w: number }>`
  width: ${(p) => p.$w}px;
  height: 18px;
  padding: 0 14px;
  display: flex;
  align-items: center;
  background: #565656;
  input { flex: 1; width: 100%; min-width: 0; border: 0; padding: 0; background: none; text-align: right; outline: 0; }
`;
const FrameField = styled.input`
  width: 73px;
  height: 18px;
  border: 0;
  text-align: center;
  background: #565656;
`;

const Timeline = () => (
  <Area $bg="#424242">
    <AreaHeader $bg="#383838">
      <Group $gap={7}><Cell $w={30} aria-label="Editor type"><Clock /><Chevron /></Cell></Group>
      <Group $gap={2}>
        <Cell $w={69} $gap={6}>Playback<Chevron /></Cell>
        <Cell $w={59} $gap={6}>Keying<Chevron /></Cell>
      </Group>
      <MenuButton>View</MenuButton>
      <MenuButton>Marker</MenuButton>
      <Spacer />
      <Group $gap={7}>
        <Cell $w={19} $tone="light" aria-label="Record"><S size={11} sw={0}><circle cx="8" cy="8" r="7" fill="#dedede" /></S></Cell>
        <Cell $w={20} $tone="faint" aria-label="Record options"><Chevron dim /></Cell>
      </Group>
      <Group>
        {['first', 'prevKey', 'back', 'play', 'nextKey', 'last'].map((k, i) => (
          <Cell key={k} $w={i % 5 ? 20 : 19} $tone="light" aria-label={k}><Transport kind={k} /></Cell>
        ))}
      </Group>
      <Spacer />
      <Group $gap={7}><FrameField defaultValue="5" aria-label="Current frame" /></Group>
      <Group>
        <Cell $w={19} $tone="light" aria-label="Preview range"><Stopwatch /></Cell>
        <TimelineNum $w={88}>Start<input defaultValue="1" /></TimelineNum>
        <TimelineNum $w={84}>End<input defaultValue="250" /></TimelineNum>
      </Group>
    </AreaHeader>
    <Ruler>
      <Frames>
        {Array.from({ length: 26 }, (_, i) => <FrameLabel key={i}>{i * 10}</FrameLabel>)}
        <Playhead>5</Playhead>
      </Frames>
    </Ruler>
    <Lane>
      <Frames>
        {Array.from({ length: 26 }, (_, i) => <FrameTrack key={i} />)}
      </Frames>
      <OutOfRange $to="54px" />
      <OutOfRange $from="calc(100% - 54px)" />
    </Lane>
    <ScrollBar><i /><i /></ScrollBar>
    <Arrow side="left" top={40} />
    <Arrow side="right" top={40} />
  </Area>
);

/* ---------- right column ---------- */

const Stage = styled.div`
  flex: 1;
  display: flex;
  justify-content: center;
  align-items: flex-start;
  padding: 211px 0 0 4px;
`;
const Checkerboard = () => (
  <svg width="361" height="361" viewBox="-0.5 -0.5 361 361" fill="#288ad0" stroke="#ebe64c">
    {Array.from({ length: 64 }, (_, i) => [i % 8, Math.floor(i / 8)])
      .filter(([x, y]) => (x + y) % 2 === 1)
      .map(([x, y]) => <rect key={`${x}-${y}`} x={x * 45} y={y * 45} width="45" height="45" />)}
  </svg>
);

const SearchBox = styled.label`
  width: 110px;
  height: 18px;
  display: flex;
  align-items: center;
  padding: 0 4px;
  border-radius: 4px;
  background: #1d1d1d;
  box-shadow: 0 0 0 1px #484848;
  input { flex: 1; min-width: 0; border: 0; background: none; outline: 0; padding: 0 3px; }
`;
const Outline = styled.ul`
  margin: 0;
  padding: 1px 0 0;
  list-style: none;
  height: 49px;
  overflow: hidden;
`;
const OutlineRow = styled.li<{ $alt?: boolean; $indent: number }>`
  display: flex;
  align-items: center;
  gap: 6px;
  height: 21px;
  padding: 0 10px 0 ${(p) => p.$indent}px;
  background: ${(p) => (p.$alt ? '#2d2d2d' : '#282828')};
  color: #c8c8c8;
`;
const IconBox = styled.span<{ $bg: string }>`
  width: 20px;
  height: 18px;
  border-radius: 4px;
  display: flex;
  align-items: center;
  justify-content: center;
  background: ${(p) => p.$bg};
`;
const Toggles = styled.span`
  margin-left: auto;
  display: flex;
  align-items: center;
  gap: 5px;
`;
const Disclosure = () => <svg width="7" height="8" viewBox="0 0 7 8"><path d="M0 0h7L3.500 8z" fill="#c8c8c8" /></svg>;
const Branch = () => <svg width="26" height="20" viewBox="0 0 26 20"><path d="M1 0v20" stroke="#666" /><path d="M19 6v8l6-4z" fill="#888" /></svg>;

const Viewport = () => (
  <Area $grow $bg={c.panel}>
    <AreaHeader $bg="#3c3c3c" $pad="0 0 0 24px">
      <Group $gap={8}><Cell $w={78} $gap={6}><Axes />Global<Spacer /><Chevron /></Cell></Group>
      <Group $gap={7}><Cell $w={30} aria-label="Pivot"><Pivot /><Chevron /></Cell></Group>
      <Group $gap={7}>
        <Cell $w={18} $tone="light" aria-label="Snap"><Magnet /></Cell>
        <Cell $w={32} aria-label="Snap type"><SnapInc /><Chevron /></Cell>
      </Group>
      <Group>
        <Cell $w={19} $tone="light" aria-label="Proportional"><Radio /></Cell>
        <Cell $w={31} $tone="faint" aria-label="Falloff"><Falloff /><Chevron dim /></Cell>
      </Group>
      <Spacer />
      <Group $gap={7}><Cell $w={30} aria-label="Visibility"><EyeCursor /><Chevron /></Cell></Group>
      <Group $gap={7}>
        <Cell $w={19} $tone="light" aria-label="Gizmos"><Gizmo /></Cell>
        <Cell $w={19} $tone="faint" aria-label="Gizmo options"><Chevron dim /></Cell>
      </Group>
      <Group $gap={7}>
        <Cell $w={18} $tone="light" aria-label="Overlays"><Overlay /></Cell>
        <Cell $w={20} $tone="faint" aria-label="Overlay options"><Chevron dim /></Cell>
      </Group>
      <Group $gap={7}><Cell $w={18} $tone="light" aria-label="X-ray"><Xray /></Cell></Group>
      <Group>
        <Cell $w={19} $tone="light" aria-label="Wireframe"><Globe /></Cell>
        <Cell $w={18} $tone="blue" aria-label="Solid"><Solid /></Cell>
      </Group>
    </AreaHeader>
    <Stage><Checkerboard /></Stage>
    <Arrow side="left" top={39} />
    <Arrow side="right" top={39} />
  </Area>
);

const Outliner = () => (
  <Area $bg="#282828">
    <AreaHeader $bg="#3c3c3c" $pad="0 7px 0 8px">
      <Group $gap={8}><Cell $w={30} aria-label="Editor type"><Tree /><Chevron /></Cell></Group>
      <Group><Cell $w={30} aria-label="Display mode"><Layers /><Chevron /></Cell></Group>
      <Spacer $grow={8} />
      <SearchBox><Search size={16} /><input type="text" aria-label="Filter" /></SearchBox>
      <Spacer $grow={11} />
      <Group $gap={7}><Cell $w={30} aria-label="Filter options"><Funnel /><Chevron /></Cell></Group>
      <Group><Cell $w={18} $tone="light" aria-label="New collection"><NewCollection /></Cell></Group>
    </AreaHeader>
    <Outline>
      <OutlineRow $indent={23}><Box />Scene Collection</OutlineRow>
      <OutlineRow $alt $indent={26}>
        <Disclosure />
        <IconBox $bg="#595959"><Box /></IconBox>
        Collection
        <Toggles><TickMark /><Eye size={15} /><Camera /></Toggles>
      </OutlineRow>
      <OutlineRow $indent={29}>
        <Branch />
        <MovieCam color="#d0864c" />
        Camera
        <IconBox $bg="#4a4a4a"><MovieCam color="#1fa98a" /></IconBox>
        <Toggles><Eye size={15} /><Camera /></Toggles>
      </OutlineRow>
    </Outline>
  </Area>
);

/* ---------- status bar and system taskbar ---------- */

const StatusBar = styled.footer`
  margin-top: 2px;
  height: 19px;
  display: grid;
  grid-template-columns: 236px 236px 1fr auto;
  align-items: center;
  padding: 0 9px 0 10px;
  background: #303030;
  color: #a9a9a9;
`;
const Hints = styled.div`
  display: flex;
  gap: 9px;
`;
const Hint = styled.span<{ $gap?: number }>`
  display: flex;
  align-items: center;
  gap: ${(p) => p.$gap ?? 9}px;
`;

const TaskBar = styled.footer`
  height: 40px;
  display: flex;
  align-items: center;
  background: linear-gradient(90deg, #262728 0, #262728 34%, #383633 37%, #393734 40%, #272829 45%, #232426 50%, #292a2a 58%, #28292a 100%);
  font-family: ${SYS_FONT};
  color: #fff;
`;
const TaskButton = styled.button<{ $state?: 'open' | 'active' }>`
  position: relative;
  width: 49px;
  height: 40px;
  display: flex;
  align-items: center;
  justify-content: center;
  background: ${(p) => (p.$state === 'active' ? '#545656' : 'none')};
  &::after {
    content: '';
    position: absolute;
    bottom: 0;
    left: ${(p) => (p.$state === 'active' ? 0 : 4)}px;
    right: ${(p) => (p.$state === 'active' ? 0 : 4)}px;
    height: 2px;
    background: ${(p) => (p.$state ? '#b7b3af' : 'none')};
  }
`;
const Tray = styled.div`
  margin-left: auto;
  height: 40px;
  display: flex;
  align-items: center;
  gap: 8px;
  padding-right: 1px;
  font-size: 13px;
`;
const Weather = styled.span`
  display: flex;
  align-items: center;
  gap: 9px;
  margin-right: 8px;
`;
const TimeBlock = styled.time`
  width: 60px;
  margin-right: 7px;
  font-size: 11px;
  line-height: 18px;
  text-align: center;
  white-space: nowrap;
`;
const ShowDesktop = styled.button`
  width: 3px;
  height: 40px;
  margin-left: 10px;
  border-left: 1px solid #8a8a8a;
`;

const TaskIcons = () => (
  <>
    <TaskButton aria-label="Start"><svg width="17" height="17" viewBox="0 0 17 17" fill="#fff"><path d="M0 2.500 7 1.500V8H0zM8 1.300 17 0v8H8zM0 9h7v6.500L0 14.500zM8 9h9v8L8 15.700z" /></svg></TaskButton>
    <TaskButton aria-label="Task view"><svg width="17" height="17" viewBox="0 0 17 17" fill="none" stroke="#f0f0f0" strokeWidth="1.300"><path d="M1 0v3h10V0M1 17v-3h10v3M1 5.500h10v6H1zM14.500 0v3M14.500 9v8" /><path d="M13 5h3v3h-3z" fill="#fff" stroke="none" /></svg></TaskButton>
    <TaskButton aria-label="File Explorer"><svg width="22" height="20" viewBox="0 0 22 20"><path d="M0 1h9l2 2v3H0z" fill="#e8a80c" /><path d="M0 4h22v14H0z" fill="#ffd868" /><path d="M4 20v-7q0-2 2-2h10q2 0 2 2v7h-4v-5H8v5z" fill="#3f97dc" /></svg></TaskButton>
    <TaskButton $state="open" aria-label="Opera"><svg width="24" height="24" viewBox="0 0 24 24"><ellipse cx="12" cy="12" rx="11.500" ry="11.500" fill="#e8102a" /><path d="M14 1a11.500 11.500 0 0 1 0 22" fill="#ff5252" /><ellipse cx="12" cy="12" rx="5" ry="9" fill="#262728" /></svg></TaskButton>
    <TaskButton $state="active" aria-label="Snipping tool"><svg width="24" height="26" viewBox="0 0 24 26" fill="none"><ellipse cx="13" cy="10" rx="8" ry="7.500" stroke="#d8400c" strokeWidth="4" /><path d="M12 1v17" stroke="#cfd4d8" strokeWidth="3.500" /><path d="M12 15 18 8" stroke="#b8bdc2" strokeWidth="2.500" /><circle cx="6" cy="20" r="3" stroke="#1267b0" strokeWidth="2.400" /><circle cx="14" cy="22" r="2.500" stroke="#1c9ae8" strokeWidth="2.400" /></svg></TaskButton>
    <TaskButton $state="open" aria-label="Blender"><BlenderLogo size={24} /></TaskButton>
    <TaskButton aria-label="Blender"><BlenderLogo size={24} /></TaskButton>
    <TaskButton aria-label="Blender"><BlenderLogo size={24} /></TaskButton>
    <TaskButton $state="open" aria-label="Sync"><svg width="24" height="24" viewBox="0 0 24 24" fill="none"><circle cx="12" cy="12" r="12" fill="#3c3c3c" /><path d="M3.500 9.500a9 9 0 0 1 16.500-2M20.500 14.500a9 9 0 0 1-16.500 2M20.800 4v4h-4M3.200 20v-4h4M3 11v3M21 10v3" stroke="#f4f4f4" strokeWidth="1.700" /></svg></TaskButton>
    <TaskButton $state="open" aria-label="Affinity Designer"><svg width="24" height="24" viewBox="0 0 24 24"><path d="M0 0h24v24H0z" fill="#45c0f8" /><path d="M0 0h13L0 21z" fill="#1c78c4" /><path d="M14 0 1 22M7 15h17M9 9l8 15M5 15l1 9" stroke="#1a5f98" strokeWidth="1.200" fill="none" /></svg></TaskButton>
    <TaskButton $state="open" aria-label="Affinity Photo"><svg width="24" height="24" viewBox="0 0 24 24"><path d="M0 0h24v24H0z" fill="#ee7cfb" /><path d="M0 0h10L0 16z" fill="#7e4bd0" /><path d="M7 0l6 10M12 10 2 24M6 10h10l8 13M16 10 24 0M6 16h14M10 16l4 8" stroke="#6b2f96" strokeWidth="1.200" fill="none" /></svg></TaskButton>
  </>
);

const TABS = ['Layout', '3D', 'Modeling', 'Sculpting', 'UV Editing', 'Texture Paint', 'Shading', 'Animation', 'Rendering', 'Compositing', 'Geometry Nodes', 'Scripting', 'Shader', 'Sverchok'];

export default function App() {
  return (
    <Page>
      <GlobalStyle />
      <TitleBar>
        <BlenderLogo size={15} />
        Blender
        <TitleProgress />
        <WindowButtons>
          <button aria-label="Minimize"><S size={11} sw={1.400}><path d="M0 8h16" /></S></button>
          <button aria-label="Restore"><S size={11} sw={1.400}><path d="M1 4.500h10.500V15H1zM4.500 4V1H15v10.500h-3" /></S></button>
          <button aria-label="Close"><S size={11} sw={1.400}><path d="M1 1l14 14M15 1 1 15" /></S></button>
        </WindowButtons>
      </TitleBar>

      <TopBar>
        <BlenderLogo size={17} mono />
        <Menus>
          {['File', 'Edit', 'Render', 'Window', 'Help'].map((m) => <MenuButton key={m}>{m}</MenuButton>)}
        </Menus>
        <Tabs>
          {TABS.map((t) => <Tab key={t} $active={t === 'Sverchok'}>{t}</Tab>)}
          <AddTab aria-label="Add workspace"><S size={10} sw={1.500}><path d="M8 1v14M1 8h14" /></S></AddTab>
        </Tabs>
        <Spacer />
        <Group $gap={7}>
          <Cell $w={31} aria-label="Scene"><Scene /><Chevron /></Cell>
          <TextCell $w={120} defaultValue="Scene" aria-label="Scene name" />
          <Cell $w={19} $tone="light" aria-label="New scene"><Copy /></Cell>
          <Cell $w={20} aria-label="Delete scene"><Cross dim /></Cell>
        </Group>
        <Group>
          <Cell $w={31} aria-label="View layer"><Layers /><Chevron /></Cell>
          <TextCell $w={120} defaultValue="View Layer" aria-label="View layer name" />
          <Cell $w={20} $tone="light" aria-label="New layer"><Copy /></Cell>
          <Cell $w={20} aria-label="Delete layer"><Cross dim /></Cell>
        </Group>
      </TopBar>

      <Workspace>
        <Column $gap={4}>
          <Area $grow $bg={c.canvas}>
            <AreaHeader $pad="0 1px 0 8px">
              <Group $gap={7}><Cell $w={30} aria-label="Editor type"><Dna /><Chevron /></Cell></Group>
              {['View', 'Select', 'Add', 'Node'].map((m) => <MenuButton key={m}>{m}</MenuButton>)}
              <Spacer $grow={7} />
              <Group $gap={8}>
                <Cell $w={30} aria-label="Node tree"><Dna /><Chevron /></Cell>
                <TextCell $w={120} defaultValue="sv.001" aria-label="Tree name" />
                <Cell $w={20} $tone="blue" aria-label="Fake user"><Shield /></Cell>
                <Cell $w={19} $tone="light" aria-label="New tree"><Copy /></Cell>
                <Cell $w={20} $tone="light" aria-label="Unlink"><Cross /></Cell>
              </Group>
              <Pin />
              <Spacer $grow={6} />
              <Group $gap={8}><Cell $w={18} $tone="light" aria-label="Parent tree"><UpArrow /></Cell></Group>
              <Group $gap={12}>
                <Cell $w={18} $tone="light" aria-label="Snap"><Magnet /></Cell>
                <Cell $w={31} aria-label="Snap type"><SnapGrid /><Chevron /></Cell>
              </Group>
              <Dna />
              <HeaderLabel>Examples</HeaderLabel>
              <HeaderLabel><Check />Processing</HeaderLabel>
            </AreaHeader>
            <NodeCanvas />
          </Area>
          <Timeline />
        </Column>
        <Column $gap={3}>
          <Viewport />
          <Outliner />
        </Column>
      </Workspace>

      <StatusBar>
        <Hints>
          <Hint><Mouse part="l" />Select</Hint>
          <Hint $gap={4}><Mouse part="l" drag />Box Select</Hint>
        </Hints>
        <Hint><Mouse part="m" />Pan View</Hint>
        <Hint><Mouse part="r" />Node Context Menu</Hint>
        <span>2.93.1</span>
      </StatusBar>

      <TaskBar>
        <TaskIcons />
        <Tray>
          <Weather>
            <svg width="24" height="20" viewBox="0 0 24 20"><path d="M6 19a6 6 0 0 1-1-11.500A8 7 0 0 1 19 6a6.500 6.500 0 0 1-1 13z" fill="#cfe6fa" /><path d="M12 2a7 7 0 0 1 8 5l-5-1z" fill="#6fb0e8" /></svg>
            <span>82°F</span>
            <span>Cloudy</span>
          </Weather>
          <S size={14}><path d="M1.500 11 8 4.500 14.500 11" /></S>
          <S size={17} sw={1.200}><path d="M4.500 3.500H15v8H4.500zM9.500 11.500V14.500M6.500 14.500h6M1 2h4v4H1zM3 6v8.500" /></S>
          <S size={17} sw={1.100}><path d="M1 6h2.500L7 2.500v11L3.500 10H1zM9 6q1.500 2 0 4M11 4.500q3 3.500 0 7" /><path d="M13 3q4 5 0 10" stroke="#888" /></S>
          <span>ENG</span>
          <TimeBlock>10:14 PM<br />7/23/2021</TimeBlock>
          <S size={18} sw={1.200}><path d="M1 1.500h14v10.500h-5L8 14.500 6 12H1z" /></S>
          <ShowDesktop aria-label="Show desktop" />
        </Tray>
      </TaskBar>
    </Page>
  );
}
